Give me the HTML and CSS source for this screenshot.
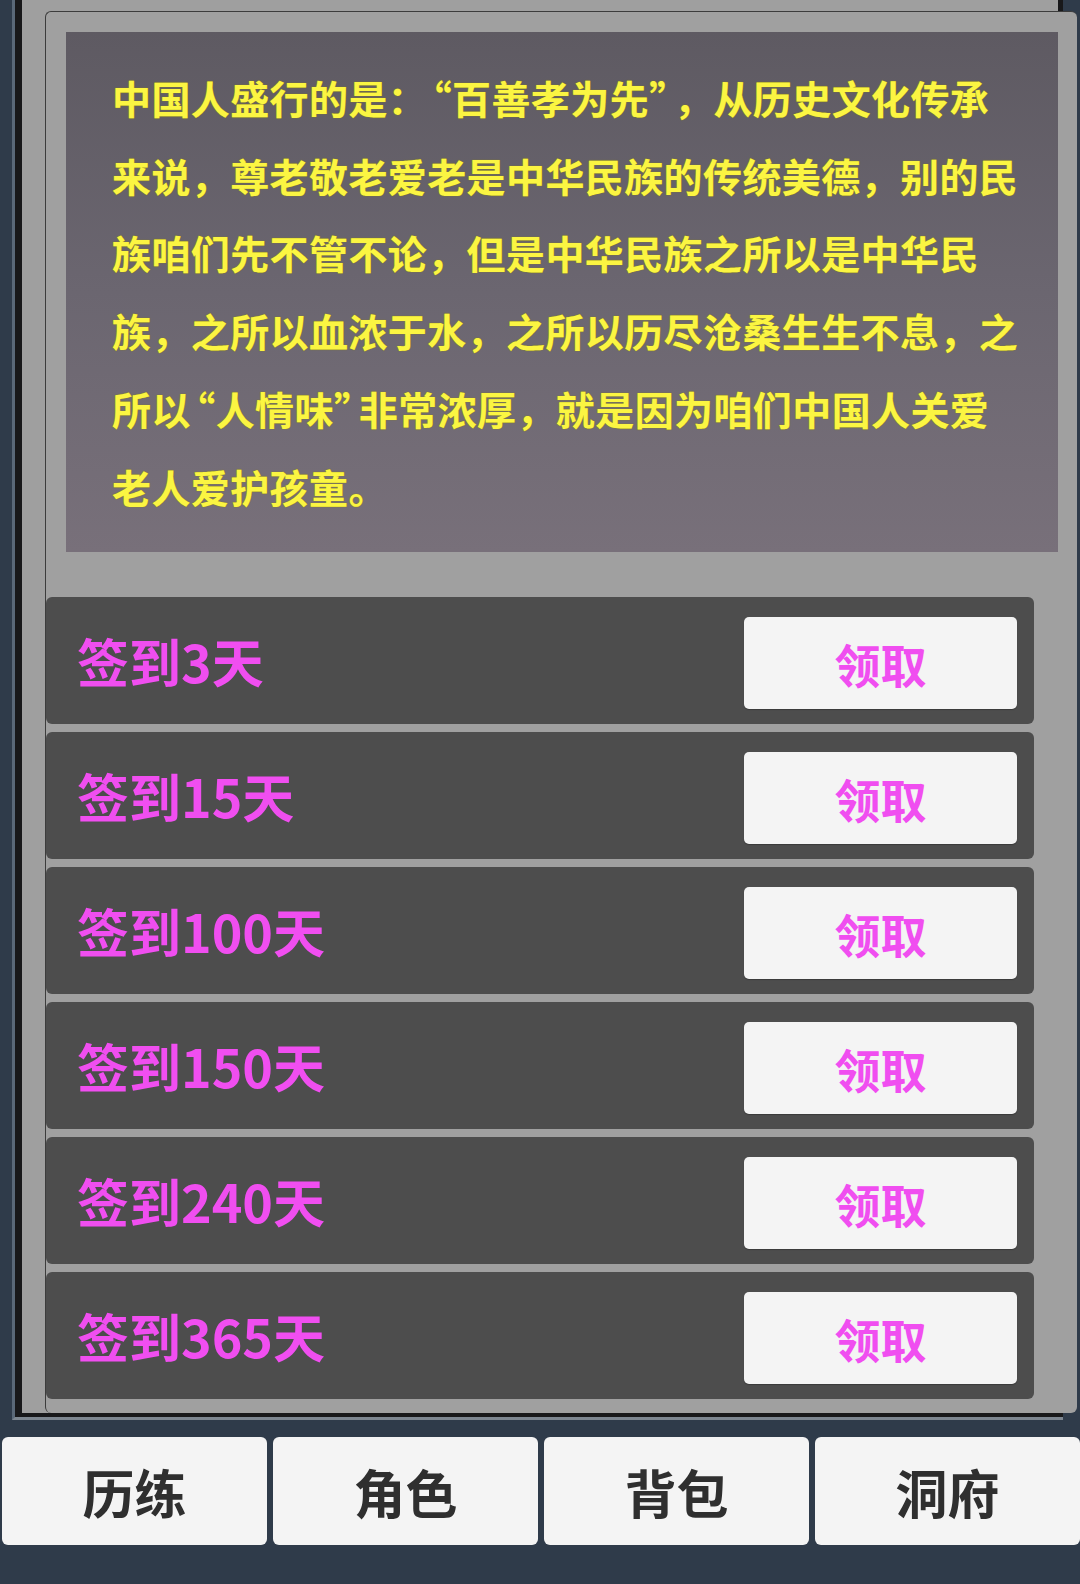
FILE: index.html
```html
<!DOCTYPE html>
<html lang="zh-CN">
<head>
<meta charset="utf-8">
<title>签到</title>
<link rel="stylesheet" href="styles.css">
</head>
<body>
<div class="frame">
  <div class="frame-inner">
    <div class="panel">
      <div class="notice">
        <p class="notice-text">中国人盛行的是：<span class="ql">“</span>百善孝为先<span class="qr">”</span>，从历史文化传承<br>来说，尊老敬老爱老是中华民族的传统美德，别的民<br>族咱们先不管不论，但是中华民族之所以是中华民<br>族，之所以血浓于水，之所以历尽沧桑生生不息，之<br>所以<span class="ql">“</span>人情味<span class="qr">”</span>非常浓厚，就是因为咱们中国人关爱<br>老人爱护孩童。</p>
      </div>
      <div class="rewards">
        <div class="reward"><span class="reward-label">签到3天</span><button class="claim">领取</button></div>
        <div class="reward"><span class="reward-label">签到15天</span><button class="claim">领取</button></div>
        <div class="reward"><span class="reward-label">签到100天</span><button class="claim">领取</button></div>
        <div class="reward"><span class="reward-label">签到150天</span><button class="claim">领取</button></div>
        <div class="reward"><span class="reward-label">签到240天</span><button class="claim">领取</button></div>
        <div class="reward"><span class="reward-label">签到365天</span><button class="claim">领取</button></div>
      </div>
    </div>
  </div>
</div>
<nav class="tabbar">
  <button class="tab">历练</button>
  <button class="tab">角色</button>
  <button class="tab">背包</button>
  <button class="tab">洞府</button>
</nav>
</body>
</html>
```

FILE: styles.css
```css
* { box-sizing: border-box; }
html, body {
  margin: 0;
  padding: 0;
  background: #2f3b4a;
  width: 1080px;
  height: 1584px;
  overflow: hidden;
  font-family: "Noto Sans CJK SC", "Noto Sans", sans-serif;
}
.frame {
  margin-left: 12px;
  width: 1051px;
  border-left: 3px solid #5a6878;
  border-bottom: 3px solid #7d8690;
}
.frame-inner {
  background: #9f9f9f;
  border-left: 7px solid #18181a;
  border-right: 5px solid #18181a;
  border-bottom: 4px solid #18181a;
  padding-top: 11px;
}
.panel {
  margin-left: 23px;
  width: 1032px;
  background: #a0a0a0;
  border-top: 1px solid #3c3c3c;
  border-left: 1px solid #3c3c3c;
  border-radius: 6px;
  padding: 20px 0 14px 0;
}
.notice {
  margin-left: 20px;
  width: 992px;
  height: 520px;
  background: linear-gradient(180deg, #5e5a62 0%, #6b6670 50%, #78707a 100%);
  padding: 27px 0 0 46px;
}
.notice-text {
  margin: 0;
  color: #fbf542;
  font-size: 39px;
  letter-spacing: 0.4px;
  line-height: 77.7px;
  font-weight: 700;
  white-space: nowrap;
  text-spacing-trim: space-all;
  text-shadow: 0 0 1px #8c861c, 0 0 1px #8c861c;
}
.ql,
.qr {
  font-feature-settings: "halt" 1;
}
.ql {
  padding-left: 5px;
}
.qr {
  padding-right: 5px;
}
.rewards {
  margin-top: 45px;
  display: flex;
  flex-direction: column;
  gap: 8px;
}
.reward {
  width: 988px;
  height: 127px;
  background: #4d4d4d;
  border-radius: 6px;
  display: flex;
  align-items: center;
  justify-content: space-between;
  padding: 0 17px 0 31px;
}
.reward-label {
  color: #f04ef0;
  font-size: 52px;
  font-weight: 700;
  line-height: 1;
}
.claim {
  align-self: flex-start;
  margin-top: 20px;
  width: 273px;
  height: 92px;
  border: none;
  border-radius: 5px;
  background: #f4f4f4;
  color: #f04ef0;
  font-family: "Noto Sans CJK SC", sans-serif;
  font-size: 46px;
  font-weight: 700;
  padding: 0;
  box-shadow: 0 1px 1px rgba(0,0,0,0.25);
}
.tabbar {
  margin-top: 17px;
  display: flex;
  gap: 6px;
  padding-left: 2px;
}
.tab {
  width: 265px;
  height: 108px;
  border: none;
  border-radius: 6px;
  background: #f4f4f4;
  color: #2f2f2f;
  font-family: "Noto Sans CJK SC", sans-serif;
  font-size: 52px;
  font-weight: 700;
  padding: 0;
}
```
